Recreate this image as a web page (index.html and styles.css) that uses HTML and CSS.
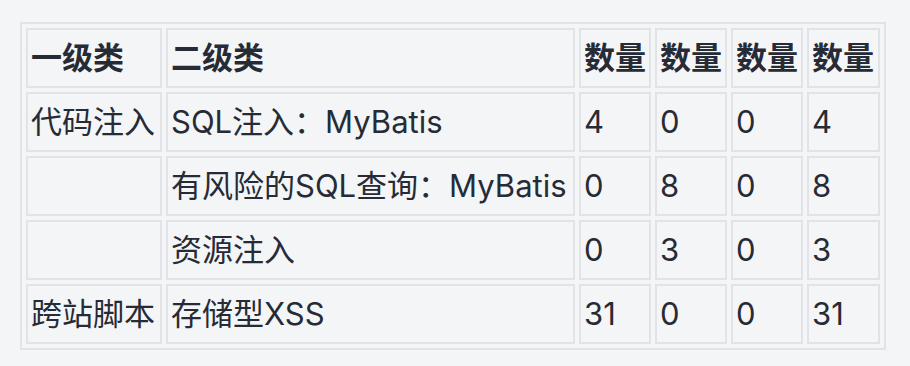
FILE: index.html
```html
<!DOCTYPE html>
<html lang="zh-CN">
<head>
<meta charset="utf-8">
<title>统计表</title>
<link rel="stylesheet" href="styles.css">
</head>
<body>
<table class="stats">
  <colgroup>
    <col class="c1"><col class="c2"><col class="c3"><col class="c4"><col class="c5"><col class="c6">
  </colgroup>
  <thead>
    <tr><th>一级类</th><th>二级类</th><th>数量</th><th>数量</th><th>数量</th><th>数量</th></tr>
  </thead>
  <tbody>
    <tr><td>代码注入</td><td>SQL注入：MyBatis</td><td>4</td><td>0</td><td>0</td><td>4</td></tr>
    <tr><td></td><td>有风险的SQL查询：MyBatis</td><td>0</td><td>8</td><td>0</td><td>8</td></tr>
    <tr><td></td><td>资源注入</td><td>0</td><td>3</td><td>0</td><td>3</td></tr>
    <tr><td>跨站脚本</td><td>存储型XSS</td><td>31</td><td>0</td><td>0</td><td>31</td></tr>
  </tbody>
</table>
</body>
</html>
```
FILE: styles.css
```css
html, body {
  margin: 0;
  background: #f4f5f7;
}
body {
  padding: 22px 20px;
  font-family: "Inter", "Noto Sans CJK SC", sans-serif;
  color: #262b35;
}
.stats {
  table-layout: fixed;
  width: 866px;
  border-collapse: separate;
  border-spacing: 4px;
  border: 2px solid #e2e3e6;
}
.stats .c1 { width: 136px; }
.stats .c2 { width: 409px; }
.stats .c3, .stats .c4, .stats .c5 { width: 72px; }
.stats .c6 { width: 73px; }
.stats th, .stats td {
  box-sizing: border-box;
  height: 60px;
  padding: 0 3px;
  border: 2px solid #e2e3e6;
  text-align: left;
  vertical-align: middle;
  font-size: 31px;
  line-height: 56px;
  white-space: nowrap;
  overflow: hidden;
}
.stats th {
  font-weight: 700;
}
.stats td {
  font-weight: 400;
}
```
